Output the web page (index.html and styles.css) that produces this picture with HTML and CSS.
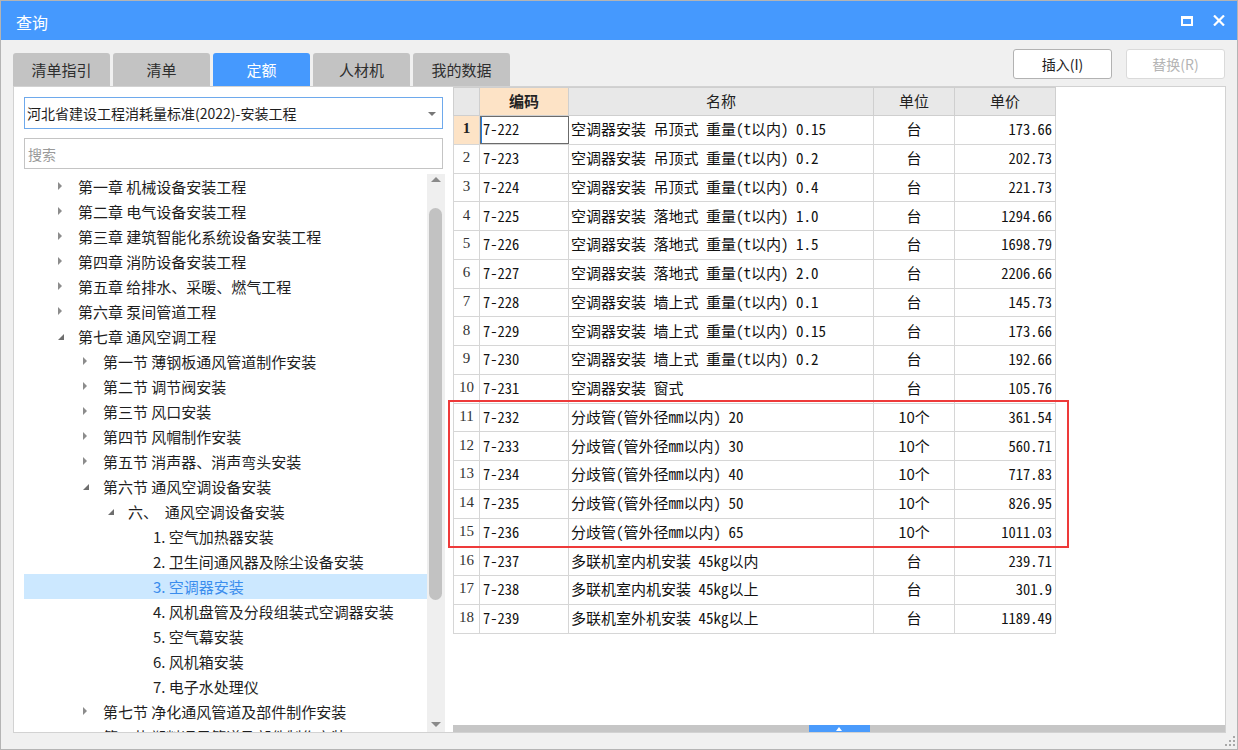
FILE: index.html
```html
<!DOCTYPE html>
<html lang="zh-CN">
<head>
<meta charset="utf-8">
<title>查询</title>
<link rel="stylesheet" href="styles.css">
</head>
<body>
<div class="window">
  <div class="titlebar">
    <span class="title">查询</span>
    <div class="win-btns">
      <span class="win-max"></span>
      <svg class="win-close" width="12" height="11" viewBox="0 0 12 11"><path d="M1 0.5 L11 10.5 M11 0.5 L1 10.5" stroke="#fff" stroke-width="2.2" fill="none"/></svg>
    </div>
  </div>
  <div class="body">
    <div class="toolbar">
      <div class="tabs">
        <div class="tab">清单指引</div>
        <div class="tab">清单</div>
        <div class="tab active">定额</div>
        <div class="tab">人材机</div>
        <div class="tab">我的数据</div>
      </div>
      <div class="actions">
        <button class="btn">插入(I)</button>
        <button class="btn disabled">替换(R)</button>
      </div>
    </div>
    <div class="content">
      <div class="left">
        <div class="select">河北省建设工程消耗量标准(2022)-安装工程<span class="caret"></span></div>
        <div class="search">搜索</div>
        <div class="tree-wrap">
          <div class="tree">
            <div class="node l1"><span class="tw"><span class="arr-r"></span></span>第一章 机械设备安装工程</div>
            <div class="node l1"><span class="tw"><span class="arr-r"></span></span>第二章 电气设备安装工程</div>
            <div class="node l1"><span class="tw"><span class="arr-r"></span></span>第三章 建筑智能化系统设备安装工程</div>
            <div class="node l1"><span class="tw"><span class="arr-r"></span></span>第四章 消防设备安装工程</div>
            <div class="node l1"><span class="tw"><span class="arr-r"></span></span>第五章 给排水、采暖、燃气工程</div>
            <div class="node l1"><span class="tw"><span class="arr-r"></span></span>第六章 泵间管道工程</div>
            <div class="node l1"><span class="tw"><span class="arr-d"></span></span>第七章 通风空调工程</div>
            <div class="node l2"><span class="tw"><span class="arr-r"></span></span>第一节 薄钢板通风管道制作安装</div>
            <div class="node l2"><span class="tw"><span class="arr-r"></span></span>第二节 调节阀安装</div>
            <div class="node l2"><span class="tw"><span class="arr-r"></span></span>第三节 风口安装</div>
            <div class="node l2"><span class="tw"><span class="arr-r"></span></span>第四节 风帽制作安装</div>
            <div class="node l2"><span class="tw"><span class="arr-r"></span></span>第五节 消声器、消声弯头安装</div>
            <div class="node l2"><span class="tw"><span class="arr-d"></span></span>第六节 通风空调设备安装</div>
            <div class="node l3"><span class="tw"><span class="arr-d"></span></span>六、&nbsp;&nbsp;通风空调设备安装</div>
            <div class="node l4"><span class="tw"></span>1. 空气加热器安装</div>
            <div class="node l4"><span class="tw"></span>2. 卫生间通风器及除尘设备安装</div>
            <div class="node l4 selected"><span class="tw"></span>3. 空调器安装</div>
            <div class="node l4"><span class="tw"></span>4. 风机盘管及分段组装式空调器安装</div>
            <div class="node l4"><span class="tw"></span>5. 空气幕安装</div>
            <div class="node l4"><span class="tw"></span>6. 风机箱安装</div>
            <div class="node l4"><span class="tw"></span>7. 电子水处理仪</div>
            <div class="node l2"><span class="tw"><span class="arr-r"></span></span>第七节 净化通风管道及部件制作安装</div>
            <div class="node l2"><span class="tw"><span class="arr-r"></span></span>第八节 塑料通风管道及部件制作安装</div>
          </div>
          <div class="vscroll">
            <span class="sb-up"></span>
            <div class="sb-track"><div class="sb-thumb"></div></div>
            <span class="sb-down"></span>
          </div>
        </div>
      </div>
      <div class="right">
        <div class="grid-area">
          <table class="grid">
            <colgroup><col class="c-no"><col class="c-code"><col class="c-name"><col class="c-unit"><col class="c-price"></colgroup>
            <thead>
              <tr><th></th><th class="cur">编码</th><th>名称</th><th>单位</th><th>单价</th></tr>
            </thead>
            <tbody>
              <tr><td class="no cur">1</td><td class="code sel">7-222</td><td class="name">空调器安装 吊顶式 重量(t以内) 0.15</td><td class="unit">台</td><td class="price">173.66</td></tr>
              <tr><td class="no">2</td><td class="code">7-223</td><td class="name">空调器安装 吊顶式 重量(t以内) 0.2</td><td class="unit">台</td><td class="price">202.73</td></tr>
              <tr><td class="no">3</td><td class="code">7-224</td><td class="name">空调器安装 吊顶式 重量(t以内) 0.4</td><td class="unit">台</td><td class="price">221.73</td></tr>
              <tr><td class="no">4</td><td class="code">7-225</td><td class="name">空调器安装 落地式 重量(t以内) 1.0</td><td class="unit">台</td><td class="price">1294.66</td></tr>
              <tr><td class="no">5</td><td class="code">7-226</td><td class="name">空调器安装 落地式 重量(t以内) 1.5</td><td class="unit">台</td><td class="price">1698.79</td></tr>
              <tr><td class="no">6</td><td class="code">7-227</td><td class="name">空调器安装 落地式 重量(t以内) 2.0</td><td class="unit">台</td><td class="price">2206.66</td></tr>
              <tr><td class="no">7</td><td class="code">7-228</td><td class="name">空调器安装 墙上式 重量(t以内) 0.1</td><td class="unit">台</td><td class="price">145.73</td></tr>
              <tr><td class="no">8</td><td class="code">7-229</td><td class="name">空调器安装 墙上式 重量(t以内) 0.15</td><td class="unit">台</td><td class="price">173.66</td></tr>
              <tr><td class="no">9</td><td class="code">7-230</td><td class="name">空调器安装 墙上式 重量(t以内) 0.2</td><td class="unit">台</td><td class="price">192.66</td></tr>
              <tr><td class="no">10</td><td class="code">7-231</td><td class="name">空调器安装 窗式</td><td class="unit">台</td><td class="price">105.76</td></tr>
              <tr><td class="no">11</td><td class="code">7-232</td><td class="name">分歧管(管外径mm以内) 20</td><td class="unit">10个</td><td class="price">361.54</td></tr>
              <tr><td class="no">12</td><td class="code">7-233</td><td class="name">分歧管(管外径mm以内) 30</td><td class="unit">10个</td><td class="price">560.71</td></tr>
              <tr><td class="no">13</td><td class="code">7-234</td><td class="name">分歧管(管外径mm以内) 40</td><td class="unit">10个</td><td class="price">717.83</td></tr>
              <tr><td class="no">14</td><td class="code">7-235</td><td class="name">分歧管(管外径mm以内) 50</td><td class="unit">10个</td><td class="price">826.95</td></tr>
              <tr><td class="no">15</td><td class="code">7-236</td><td class="name">分歧管(管外径mm以内) 65</td><td class="unit">10个</td><td class="price">1011.03</td></tr>
              <tr><td class="no">16</td><td class="code">7-237</td><td class="name">多联机室内机安装 45kg以内</td><td class="unit">台</td><td class="price">239.71</td></tr>
              <tr><td class="no">17</td><td class="code">7-238</td><td class="name">多联机室内机安装 45kg以上</td><td class="unit">台</td><td class="price">301.9</td></tr>
              <tr><td class="no">18</td><td class="code">7-239</td><td class="name">多联机室外机安装 45kg以上</td><td class="unit">台</td><td class="price">1189.49</td></tr>
            </tbody>
          </table>
          <div class="mark-box"></div>
        </div>
        <div class="splitter"><span class="split-tab"><span class="split-arrow"></span></span></div>
      </div>
    </div>
    <div class="footer">
      <svg class="grip" width="12" height="12" viewBox="0 0 12 12">
        <rect x="9" y="1" width="2" height="2" fill="#a8a8a8"/>
        <rect x="5" y="5" width="2" height="2" fill="#a8a8a8"/>
        <rect x="9" y="5" width="2" height="2" fill="#a8a8a8"/>
        <rect x="1" y="9" width="2" height="2" fill="#a8a8a8"/>
        <rect x="5" y="9" width="2" height="2" fill="#a8a8a8"/>
        <rect x="9" y="9" width="2" height="2" fill="#a8a8a8"/>
      </svg>
    </div>
  </div>
</div>
</body>
</html>
```

FILE: styles.css
```css
* { box-sizing: border-box; }
html, body { margin: 0; padding: 0; }
body {
  width: 1238px;
  height: 750px;
  overflow: hidden;
  font-family: "Noto Sans CJK SC", "Noto Sans", sans-serif;
  color: #1e1e1e;
  background: #f0f0f0;
}
.window {
  width: 1238px;
  height: 750px;
  border: 1px solid #b4b4b4;
  display: flex;
  flex-direction: column;
  background: #f0f0f0;
}
.titlebar {
  height: 39px;
  background: #4599fe;
  display: flex;
  align-items: center;
  padding: 2px 12px 0 15px;
}
.title {
  color: #fff;
  font-size: 16px;
  flex: 1;
}
.win-btns {
  display: flex;
  align-items: center;
  gap: 20px;
  margin-top: -2px;
}
.win-max {
  display: block;
  width: 12px;
  height: 10px;
  border: 2px solid #fff;
  border-top-width: 3px;
}
.win-close { display: block; }

.body {
  flex: 1;
  display: flex;
  flex-direction: column;
  padding: 0 11px 0 12px;
}
.toolbar {
  height: 46px;
  display: flex;
  justify-content: space-between;
}
.tabs {
  display: flex;
  align-items: flex-end;
  gap: 3px;
}
.tab {
  width: 97px;
  height: 33px;
  background: #c3c3c3;
  border-radius: 3px 3px 0 0;
  font-size: 15px;
  color: #2e2e2e;
  display: flex;
  align-items: center;
  justify-content: center;
  padding-bottom: 1px;
}
.tab.active {
  background: #4599fe;
  color: #fff;
}
.actions {
  display: flex;
  gap: 14px;
  padding-top: 9px;
  margin-right: 1px;
}
.btn {
  width: 99px;
  height: 30px;
  border: 1px solid #b2b2b2;
  border-radius: 3px;
  background: #fff;
  font-family: "Noto Sans CJK SC", "Noto Sans", sans-serif;
  font-size: 14px;
  color: #222;
  padding: 0;
}
.btn.disabled {
  border-color: #dadada;
  color: #b4b4b4;
}

.content {
  height: 647px;
  display: flex;
  background: #fff;
  border: 1px solid #d2d2d2;
}
.left {
  width: 439px;
  padding: 10px 8px 0 10px;
  display: flex;
  flex-direction: column;
}
.select {
  height: 32px;
  margin-right: 2px;
  border: 1px solid #6ea9ec;
  font-size: 14px;
  color: #1e1e1e;
  display: flex;
  align-items: center;
  padding-left: 2px;
  position: relative;
}
.caret {
  position: absolute;
  right: 6px;
  top: 14px;
  width: 0;
  height: 0;
  border-left: 4px solid transparent;
  border-right: 4px solid transparent;
  border-top: 4px solid #777;
}
.search {
  height: 31px;
  margin: 9px 2px 0 0;
  border: 1px solid #c4c4c4;
  font-size: 14px;
  color: #9a9a9a;
  display: flex;
  align-items: center;
  padding-left: 3px;
}
.tree-wrap {
  margin-top: 5px;
  flex: 1;
  display: flex;
  overflow: hidden;
}
.tree {
  width: 403px;
  overflow: hidden;
}
.node {
  height: 25px;
  line-height: 25px;
  font-size: 15px;
  color: #1e1e1e;
  display: flex;
  align-items: center;
  white-space: nowrap;
  padding-bottom: 1px;
}
.node.l1 { padding-left: 29px; }
.node.l2 { padding-left: 54px; }
.node.l3 { padding-left: 79px; }
.node.l4 { padding-left: 104px; }
.node.selected {
  background: #cce8ff;
  color: #3b8ded;
}
.tw {
  width: 25px;
  height: 24px;
  flex: none;
  display: flex;
  align-items: center;
  padding-left: 5px;
}
.arr-r {
  width: 0;
  height: 0;
  border-top: 4px solid transparent;
  border-bottom: 4px solid transparent;
  border-left: 4px solid #8c8c8c;
}
.arr-d {
  width: 0;
  height: 0;
  border-left: 6px solid transparent;
  border-bottom: 6px solid #6e6e6e;
  margin-top: 2px;
}
.vscroll {
  width: 18px;
  background: #efefef;
  display: flex;
  flex-direction: column;
  align-items: center;
}
.sb-up, .sb-down {
  width: 0;
  height: 0;
  border-left: 5px solid transparent;
  border-right: 5px solid transparent;
  flex: none;
}
.sb-up {
  border-bottom: 5px solid #8a8a8a;
  margin-top: 3px;
}
.sb-down {
  border-top: 5px solid #8a8a8a;
  margin-bottom: 5px;
}
.sb-track {
  flex: 1;
  width: 100%;
  padding: 26px 3px 0 2px;
}
.sb-thumb {
  height: 392px;
  background: #c2c2c2;
  border-radius: 7px;
}

.right {
  flex: 1;
  display: flex;
  flex-direction: column;
  position: relative;
}
.grid-area {
  flex: 1;
  position: relative;
}
.grid {
  border-collapse: collapse;
  table-layout: fixed;
  width: 602px;
  font-family: "Noto Sans Mono CJK SC", "Noto Sans CJK SC", monospace;
  font-size: 15px;
  color: #111;
}
.c-no { width: 26px; }
.c-code { width: 89px; }
.c-name { width: 305px; }
.c-unit { width: 81px; }
.c-price { width: 101px; }
.grid th, .grid td {
  border: 1px solid #d6d6d6;
  padding: 0 0 2px 0;
  white-space: nowrap;
  overflow: hidden;
}
.grid th {
  height: 28px;
  background: #e8e8e8;
  font-weight: normal;
  font-family: "Noto Sans CJK SC", sans-serif;
  color: #222;
  border-color: #cfcfcf;
}
.grid th.cur {
  background: #fde3c6;
  font-weight: bold;
}
.grid td {
  height: 28.75px;
}
.grid td.no {
  text-align: center;
  font-family: "Liberation Serif", serif;
  font-size: 15px;
  color: #333;
}
.grid td.no.cur {
  background: #fde3c6;
  font-weight: bold;
  color: #222;
}
.grid td.code { padding-left: 3px; font-size: 14.5px; }
.grid td.code.sel {
  outline: 1px solid #6b6b6b;
  outline-offset: -1px;
  box-shadow: inset 2px 0 0 #1f7ee6;
}
.grid td.name { padding-left: 2px; }
.grid td.unit { text-align: center; font-family: "Noto Sans CJK SC", sans-serif; }
.grid td.price { text-align: right; padding-right: 3px; font-size: 14.5px; }
.mark-box {
  position: absolute;
  left: -5px;
  top: 313px;
  width: 621px;
  height: 148px;
  border: 2px solid #ee3a3a;
}
.splitter {
  height: 7px;
  background: #c6c6c6;
  display: flex;
  justify-content: center;
}
.split-tab {
  width: 61px;
  height: 7px;
  background: #4a9bfc;
  display: flex;
  justify-content: center;
  align-items: center;
}
.split-arrow {
  width: 0;
  height: 0;
  border-left: 3px solid transparent;
  border-right: 3px solid transparent;
  border-bottom: 4px solid #fff;
}
.footer {
  flex: 1;
  display: flex;
  justify-content: flex-end;
  align-items: flex-end;
  padding: 0 0 2px 0;
  margin-right: -10px;
}
.grip { display: block; }
```
